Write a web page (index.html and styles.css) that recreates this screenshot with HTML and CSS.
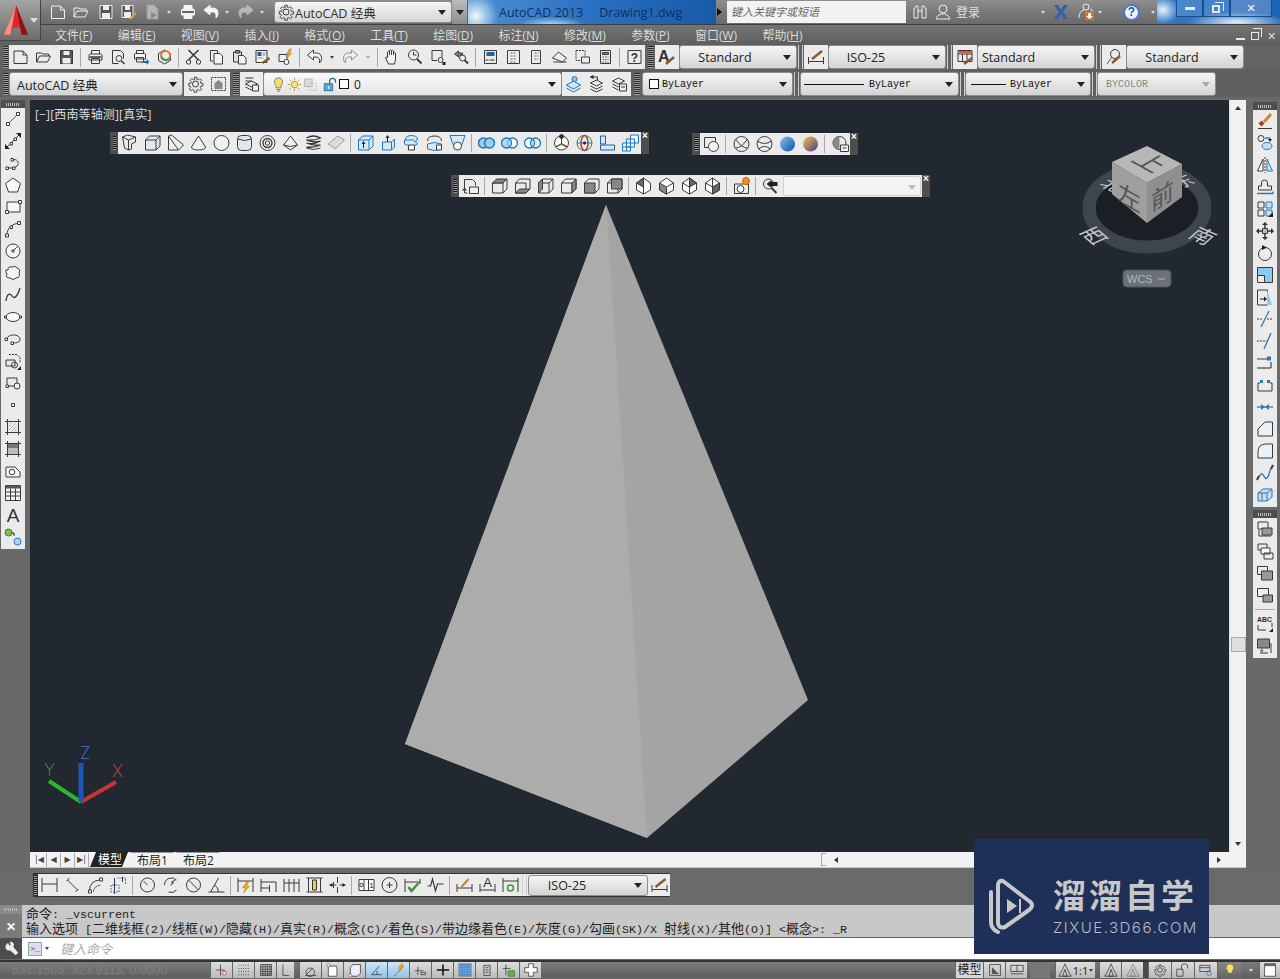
FILE: index.html
```html
<!DOCTYPE html>
<html lang="zh">
<head>
<meta charset="utf-8">
<title>AutoCAD 2013</title>
<link rel="stylesheet" href="styles.css">
</head>
<body>
<svg class="defs" width="0" height="0">
  <defs>
    <linearGradient id="ball" x1="0" y1="0" x2="1" y2="1"><stop offset="0" stop-color="#8cc4f0"/><stop offset="1" stop-color="#0a4fa8"/></linearGradient>
    <linearGradient id="gold" x1="0" y1="0" x2="1" y2="1"><stop offset="0" stop-color="#f5c33a"/><stop offset="1" stop-color="#4a3a9a"/></linearGradient>
    <symbol id="new" viewBox="0 0 18 18"><path d="M2.500 3h9l4 4v8.500h-13zM11.500 3v4h4"/></symbol>
    <symbol id="pub" viewBox="0 0 18 18"><path fill="#b5b5b5" stroke="#9a9a9a" d="M3 2h7l4 4v10H3z"/><path fill="#888" stroke="none" d="M7 9l6 3-6 4z"/></symbol>
    <symbol id="open" viewBox="0 0 18 18"><path d="M2 14V5h5l1 1h6v2M2 14l3-6h11l-3 6z"/></symbol>
    <symbol id="save" viewBox="0 0 18 18"><path fill="#555" d="M3 2.500h12v13H3z"/><path fill="#eee" stroke="none" d="M6 3h6v4H6zM5 10h8v5.500H5z"/></symbol>
    <symbol id="saveas" viewBox="0 0 18 18"><path fill="#555" d="M2 2.500h11v12H2z"/><path fill="#eee" stroke="none" d="M5 3h5v4H5zM4 9h7v5H4z"/><path stroke="#e0a030" stroke-width="2" d="M10 16l6-6"/></symbol>
    <symbol id="print" viewBox="0 0 18 18"><path d="M5 6V2.500h8V6M2.500 12V7.500q0-1.500 1.500-1.500h10q1.500 0 1.500 1.500V12zM5 10.500h8v5H5z" fill="#f4f4f4"/><path fill="#666" stroke="none" d="M3 8h12v2H3z"/></symbol>
    <symbol id="preview" viewBox="0 0 18 18"><path d="M3 2.500h8l3 3v5M3 2.500v13h6"/><circle cx="9.500" cy="10.500" r="3"/><path stroke-width="1.600" d="M12 13l3 3"/></symbol>
    <symbol id="plot" viewBox="0 0 18 18"><path d="M4 5V2.500h7V5M2 11V6.500q0-1 1-1h9q1 0 1 1V11zM4 9.500h7V14H4z" fill="#f4f4f4"/><path stroke="#1f6fb5" stroke-width="2" d="M10 14h5"/><path fill="#1f6fb5" stroke="none" d="M14 11l3 3-3 3z"/></symbol>
    <symbol id="render" viewBox="0 0 18 18"><path d="M9 2l6 3.500v7L9 16l-6-3.500v-7z"/><circle cx="10" cy="7.500" r="4.500" fill="none" stroke="#d9822b" stroke-width="2"/><path stroke="#2f9e6e" stroke-width="2" d="M6 9q3 5 8 2"/></symbol>
    <symbol id="cut" viewBox="0 0 18 18"><path stroke-width="1.600" d="M4 2l10 10M14 2L4 12"/><circle cx="4" cy="14" r="2.200"/><circle cx="14" cy="14" r="2.200"/></symbol>
    <symbol id="copy" viewBox="0 0 18 18"><path d="M3 2.500h7v3M3 2.500V13h3M6.500 5.500h6l2.500 2.500v8H6.500z" fill="#f4f4f4"/></symbol>
    <symbol id="paste" viewBox="0 0 18 18"><path d="M3 4h8v10H3zM5 2.500h4V5H5z" fill="#ddd"/><path d="M8 7.500h5l2.500 2.500v6H8z" fill="#f4f4f4"/></symbol>
    <symbol id="match" viewBox="0 0 18 18"><path fill="#f4f4f4" d="M2.500 2.500h11v12h-11z"/><path fill="#1f5fa8" stroke="none" d="M4 4h4v4H4z"/><path stroke="#888" d="M9 5h3M9 7h3M4 10h6"/><path stroke="#8a5a2a" stroke-width="2.500" d="M9 15l7-5"/></symbol>
    <symbol id="block" viewBox="0 0 18 18"><path d="M2.500 6.500h8v7h-8z"/><circle cx="10" cy="14" r="2.500" fill="#fff"/><path fill="#f0a818" stroke="#b87a10" stroke-width=".5" d="M13 1l-3 5h2l-1 4 4-5h-2l2-4z"/></symbol>
    <symbol id="undo" viewBox="0 0 18 18"><path d="M2 7l6-5v3h3q5 0 5 5.500 0 3-2 4.500 .500-6-3-6H8v3z" fill="#f4f4f4"/></symbol>
    <symbol id="redo" viewBox="0 0 18 18"><path d="M16 7l-6-5v3H7q-5 0-5 5.500 0 3 2 4.500-.500-6 3-6h3v3z" fill="#f4f4f4"/></symbol>
    <symbol id="hand" viewBox="0 0 18 18"><path fill="#f4f4f4" d="M5 16l-3-6q0-1.500 2-.500V4q1-1.500 2 0v3-4.500q1-1.500 2 0V7 3q1-1.500 2 0v4-2q1-1.500 2 0v6l-1 5z"/></symbol>
    <symbol id="zoomrt" viewBox="0 0 18 18"><circle cx="7" cy="7" r="5"/><path d="M7 4v3h3"/><path stroke-width="2" d="M10.500 11l4.500 4.500"/></symbol>
    <symbol id="zoomw" viewBox="0 0 18 18"><path d="M2.500 2.500h10v7M2.500 2.500v10h5"/><circle cx="11" cy="12" r="2.500"/><path fill="#222" stroke="none" d="M13 14h3v3h-3z"/></symbol>
    <symbol id="zoomp" viewBox="0 0 18 18"><path fill="#888" d="M2 6l4-3v2h4v2H6v2z"/><circle cx="10" cy="10" r="3"/><path stroke-width="2" d="M12 12l3.500 3.500"/></symbol>
    <symbol id="props" viewBox="0 0 18 18"><path d="M3 2.500h12v13H3z"/><path fill="#1f5fa8" stroke="none" d="M5 4h8v4H5z"/><path d="M7 12H4m9 0H8"/></symbol>
    <symbol id="grid" viewBox="0 0 18 18"><path d="M3 2.500h12v13H3z"/><path stroke="#666" stroke-dasharray="2 1" d="M6 5h6M6 8h6M6 11h6M6 14h6"/></symbol>
    <symbol id="tool" viewBox="0 0 18 18"><path d="M4 2.500h9v13H4z"/><path stroke="#666" stroke-dasharray="2 1" d="M7 5h4M7 8h4M7 11h4"/></symbol>
    <symbol id="sheet" viewBox="0 0 18 18"><path d="M2 10l6-6 8 6-4 4z" fill="#eee"/><path d="M3 14h13"/></symbol>
    <symbol id="mark" viewBox="0 0 18 18"><path stroke-dasharray="2 1" d="M2.500 2.500h9v10h-9z"/><path fill="#eee" d="M8 9h8v6H8z"/></symbol>
    <symbol id="calc" viewBox="0 0 18 18"><path d="M4 2.500h10v13H4z"/><path fill="#888" d="M6 4.500h6v2H6z"/><path stroke="#555" stroke-dasharray="1.500 1" d="M6 9h6M6 11.500h6M6 14h6"/></symbol>
    <symbol id="help" viewBox="0 0 18 18"><path d="M2.500 2.500h13v13h-13z"/><text x="9" y="14" font-size="12" font-weight="700" text-anchor="middle" fill="#333" stroke="none" font-family="Liberation Sans">?</text></symbol>
    <symbol id="gear" viewBox="0 0 18 18"><circle cx="9" cy="9" r="3"/><path d="M7.500 1.500h3v2.300l1.700.7 1.600-1.600 2.100 2.100-1.600 1.600.7 1.700h2.300v3h-2.300l-.7 1.700 1.600 1.600-2.100 2.100-1.600-1.600-1.700.7v2.300h-3v-2.300l-1.700-.7-1.600 1.600-2.100-2.100 1.600-1.600-.7-1.700H1.500v-3h2.300l.7-1.700-1.600-1.600 2.100-2.100 1.600 1.600 1.700-.7z" transform="translate(.9 .9) scale(.9)"/></symbol>
    <symbol id="wspace" viewBox="0 0 18 18"><path stroke-dasharray="2 1" d="M2 2.500h14v13H2z"/><path fill="#888" stroke="none" d="M5 14V8l4-3 4 3v6z"/></symbol>
    <symbol id="layer" viewBox="0 0 18 18"><path d="M3 3h8M3 6h6M3 9l6-3 6 3-6 3zM3 12l6 3 6-3" /><path fill="#eee" d="M10 10h6v6h-6z"/></symbol>
    <symbol id="bulb" viewBox="0 0 18 18"><path fill="#f6df62" stroke="#776" d="M9 1a5 5 0 0 1 3 9v3H6v-3a5 5 0 0 1 3-9z"/><path stroke="#666" d="M6.500 15h5M7.500 17h3"/></symbol>
    <symbol id="sun" viewBox="0 0 18 18"><circle cx="9" cy="9" r="4" fill="#f8e080" stroke="#a89040"/><path stroke="#a89040" d="M9 1v3M9 14v3M1 9h3M14 9h3M3 3l2 2M13 13l2 2M3 15l2-2M13 5l2-2"/></symbol>
    <symbol id="frz" viewBox="0 0 18 18"><path stroke="#aaa" fill="#ddd" d="M2 2.500h9v9H2z"/><path stroke="#bbb" stroke-dasharray="2 1" d="M7 7h9v9H7z"/></symbol>
    <symbol id="lock" viewBox="0 0 18 18"><path fill="#59a8d8" stroke="#24678f" d="M1.500 8h10v8.500h-10z"/><path stroke="#24678f" stroke-width="1.500" d="M8 8V5q0-3.500 3.500-3.500T15 5v2"/><path fill="#fff" stroke="none" d="M6 11h1.500v3H6z"/></symbol>
    <symbol id="lyon" viewBox="0 0 18 18"><path stroke="#1f6fb5" fill="#cfe4f5" d="M2 10l7-4 7 4-7 4z"/><path stroke="#1f6fb5" d="M2 13l7 4 7-4"/><circle cx="10" cy="4" r="2.500" fill="#9cc4e8" stroke="#1f6fb5"/></symbol>
    <symbol id="lyprev" viewBox="0 0 18 18"><path d="M3 8l6-3 6 3-6 3zM3 11l6 3 6-3M3 14l6 3 6-3"/><path fill="#222" stroke="none" d="M2 2l4-2v4z"/><path d="M5 2h5v3"/></symbol>
    <symbol id="lystate" viewBox="0 0 18 18"><path d="M2 6l6-3 6 3-6 3zM2 9l6 3M2 12l6 3"/><path fill="#eee" d="M9 9h7v7H9z"/><path d="M10.500 12h4"/></symbol>
    <symbol id="textstyle" viewBox="0 0 18 18"><text x="0" y="14" font-size="16" font-family="Liberation Sans" font-weight="700" fill="#333" stroke="none">A</text><path stroke="#8a5a2a" stroke-width="2.500" d="M8 16l8-7"/></symbol>
    <symbol id="dimstyle" viewBox="0 0 18 18"><path d="M1.500 9v7M16.500 9v7M1.500 13.500h15"/><path stroke="#8a5a2a" stroke-width="2.500" d="M5 11l10-8"/></symbol>
    <symbol id="tablestyle" viewBox="0 0 18 18"><path d="M2 2.500h14v11H2zM2 6h14M6.500 6v7.500M11 6v7.500"/><path fill="#d85a3a" stroke="none" d="M3 3h12v2.500H3z"/><path stroke="#8a5a2a" stroke-width="2.500" d="M8 16l8-6"/></symbol>
    <symbol id="mlstyle" viewBox="0 0 18 18"><circle cx="10" cy="6" r="4.500"/><path stroke="#1f5fa8" d="M7 9l-5 7"/><path stroke="#8a5a2a" stroke-width="2.500" d="M7 15l8-7"/></symbol>
    <symbol id="line" viewBox="0 0 18 18"><path stroke="#555" d="M4 14L14 4"/><path fill="#fff" d="M2.500 12.500h3v3h-3zM12.500 2.500h3v3h-3z"/></symbol>
    <symbol id="xline" viewBox="0 0 18 18"><path d="M3 15L15 3"/><path fill="#222" stroke="none" d="M1 17v-5l5 5zM17 1v5l-5-5z"/><path fill="#fff" d="M6 10.500h2.500V13H6zM10 6h2.500v2.500H10z"/></symbol>
    <symbol id="pline" viewBox="0 0 18 18"><path d="M3 14h7l3-2c3-3 0-8-5-6"/><path fill="#fff" d="M2 13h2.500v2.500H2zM8.500 13H11v2.500H8.500zM7 4.500h2.500V7H7z"/></symbol>
    <symbol id="polygon" viewBox="0 0 18 18"><path d="M9 2l7.500 5.500-3 8.500h-9l-3-8.500z" fill="#f8f8f8"/></symbol>
    <symbol id="rect" viewBox="0 0 18 18"><path d="M3 4h13v10H3z" fill="#f8f8f8"/><path fill="#fff" d="M1.500 12.500h3v3h-3zM14.500 2.500h3v3h-3z"/></symbol>
    <symbol id="arc" viewBox="0 0 18 18"><path d="M3 15C3 8 8 4 15 3"/><path fill="#fff" d="M1.500 14h3v3h-3zM6 6h2.500v2.500H6zM13.500 1.500h3v3h-3z"/></symbol>
    <symbol id="circle" viewBox="0 0 18 18"><circle cx="9" cy="9" r="7" fill="#f8f8f8"/><path d="M9 9l4-4"/><path fill="#fff" d="M8 8h2v2H8z"/></symbol>
    <symbol id="cloud" viewBox="0 0 18 18"><path d="M4 6q0-4 4-3 3-2 5 1 4 1 2 5 2 4-3 5-3 3-6 0-5 0-3-4-2-2-1-4z" fill="#f4f4f4"/></symbol>
    <symbol id="spline" viewBox="0 0 18 18"><path stroke-width="1.300" d="M2 15C3 7 6 7 8 10s5 2 8-8"/></symbol>
    <symbol id="ellipse" viewBox="0 0 18 18"><ellipse cx="9" cy="9" rx="7" ry="4.500" fill="#f8f8f8"/><path fill="#fff" d="M.5 8h2v2h-2zM15.500 8h2v2h-2z"/></symbol>
    <symbol id="elarc" viewBox="0 0 18 18"><path d="M3 9c1-6 14-5 13 1-1 3-5 3-8 3"/><path fill="#fff" d="M1 8h2.500v2.500H1zM7 12h2.500v2.500H7z"/></symbol>
    <symbol id="insert" viewBox="0 0 18 18"><path stroke-dasharray="2 1" d="M5 2.500h8l3 3v5"/><path d="M2 8h9v6H2z"/><circle cx="10.500" cy="13" r="3"/><path fill="#222" stroke="none" d="M17 14v4h-4z"/></symbol>
    <symbol id="mkblock" viewBox="0 0 18 18"><path d="M3 4h10v8H3z"/><circle cx="13" cy="12" r="3" fill="#eee"/><path fill="#fff" d="M2 11h2.500v2.500H2z"/></symbol>
    <symbol id="point" viewBox="0 0 18 18"><path fill="#fff" d="M7.500 7.500h3v3h-3z"/></symbol>
    <symbol id="hatch" viewBox="0 0 18 18"><path d="M3.500 1v16M14.500 1v16M1 3.500h16M1 14.500h16"/><path stroke="#999" stroke-dasharray="1.500 1" d="M5 8l3-3M5 12l7-7M8 13l5-5M11 13l2-2"/></symbol>
    <symbol id="gradient" viewBox="0 0 18 18"><path fill="#777" stroke="none" d="M4 4h10v4H4z"/><path fill="#bbb" stroke="none" d="M4 8h10v6H4z"/><path d="M3.500 1v16M14.500 1v16M1 3.500h16M1 14.500h16"/></symbol>
    <symbol id="region" viewBox="0 0 18 18"><path d="M2 5h9l5 5v5H2z" fill="#f8f8f8"/><circle cx="8" cy="10" r="2.800"/></symbol>
    <symbol id="table" viewBox="0 0 18 18"><path fill="#f4f4f4" d="M1.500 1.500h15v15h-15z"/><path fill="#555" stroke="none" d="M1.500 1.500h15v3h-15z"/><path d="M1.500 8h15M1.500 12h15M6.500 4.500v12M11.500 4.500v12"/></symbol>
    <symbol id="mtext" viewBox="0 0 18 18"><text x="9" y="16" font-size="19" text-anchor="middle" font-family="Liberation Sans" fill="#333" stroke="none">A</text></symbol>
    <symbol id="addsel" viewBox="0 0 18 18"><circle cx="4.500" cy="4.500" r="3.500" fill="#7cc046" stroke="#3e8020"/><circle cx="13.500" cy="13.500" r="3.500" fill="#a8d4f4" stroke="#2a78b8"/><path stroke="#222" d="M8 5h2v3"/></symbol>
    <symbol id="erase" viewBox="0 0 18 18"><path stroke="#c08a30" stroke-width="3" d="M8 10l7-8"/><path stroke="#a83a20" stroke-width="4" d="M4 13l3-3"/><path d="M2 16.500h14"/></symbol>
    <symbol id="xcopy" viewBox="0 0 18 18"><circle cx="5" cy="4.500" r="3"/><path d="M9 4h5v2"/><path fill="#222" stroke="none" d="M12 5h4l-2 3z"/><ellipse cx="11" cy="12" rx="5" ry="3.500" fill="#c5e0f5" stroke="#2a78b8"/></symbol>
    <symbol id="mirror" viewBox="0 0 18 18"><path fill="#fff" d="M7 3v12H1.500z"/><path stroke="#2a78b8" fill="#bfe0f5" d="M11 3v12h5.500z"/><path stroke-dasharray="2 1" d="M9 1v16"/></symbol>
    <symbol id="offset" viewBox="0 0 18 18"><path d="M2.500 12V8h3V5q0-3 3-3t3 3v3h4v4z"/><path stroke="#2a78b8" stroke-width="1.300" d="M1 15.500h16v-2"/></symbol>
    <symbol id="array" viewBox="0 0 18 18"><path d="M2 2h6v6H2zM2 10h6v6H2z"/><path stroke="#2a78b8" fill="#bfe0f5" d="M10 2h6v6h-6zM10 10h6v6h-6z"/><path fill="#222" stroke="none" d="M17 12v5h-5z"/></symbol>
    <symbol id="move" viewBox="0 0 18 18"><path fill="#333" stroke="none" d="M9 0l3 3H6zM9 18l-3-3h6zM0 9l3-3v6zM18 9l-3 3V6z"/><path stroke="#333" stroke-width="1.500" d="M9 3v12M3 9h12"/><path fill="#bbb" d="M6.500 6.500h5v5h-5z"/></symbol>
    <symbol id="rotate" viewBox="0 0 18 18"><circle cx="9" cy="10" r="6.500"/><path fill="#222" stroke="none" d="M6 1l5 2.500L6 6z"/></symbol>
    <symbol id="scale" viewBox="0 0 18 18"><path d="M1.500 1.500h15v15h-15z"/><path fill="#8cc8f0" stroke="none" d="M2 2h14v14H8V9H2z"/><path d="M1.500 9.500h7v7"/></symbol>
    <symbol id="stretch" viewBox="0 0 18 18"><path d="M1.500 2h10v15h-10z"/><path fill="#8cc8f0" stroke="none" d="M11 2l5 15h-5z"/><path stroke="#222" d="M4 11h6"/><path fill="#222" stroke="none" d="M8 8.500l3 2.500-3 2.500z"/></symbol>
    <symbol id="trim" viewBox="0 0 18 18"><path stroke="#2a78b8" stroke-width="1.300" d="M13 1L5 17"/><path stroke-dasharray="2 1" d="M1 9h6M11 9h6"/></symbol>
    <symbol id="extend" viewBox="0 0 18 18"><path stroke="#2a78b8" stroke-width="1.300" d="M15 1L8 17"/><path stroke-dasharray="2 1" d="M1 9h10"/></symbol>
    <symbol id="breakpt" viewBox="0 0 18 18"><path stroke="#222" d="M1 14h14V8"/><path d="M1 5h10"/><path fill="#2a78b8" stroke="none" d="M11 2.500h4v4h-4z"/></symbol>
    <symbol id="break" viewBox="0 0 18 18"><path d="M2 7v8h14V7M2 7h2M14 7h2"/><path fill="#2a78b8" stroke="none" d="M4 4h3v3H4zM11 4h3v3h-3z"/></symbol>
    <symbol id="join" viewBox="0 0 18 18"><path stroke="#2a78b8" stroke-width="1.300" d="M1 9h16"/><path fill="#2a78b8" stroke="none" d="M5 6l4 3-4 3zM13 6L9 9l4 3z"/></symbol>
    <symbol id="chamfer" viewBox="0 0 18 18"><path fill="#e8f2fa" d="M2 9l7-7h7.500v14H2z"/></symbol>
    <symbol id="fillet" viewBox="0 0 18 18"><path fill="#e8f2fa" d="M2 16V10q0-8 8-8h6.500v14z"/></symbol>
    <symbol id="blend" viewBox="0 0 18 18"><path stroke="#2a78b8" stroke-width="1.300" d="M3 13c4-9 5 4 8 1s2-6 4-10"/><path stroke-width="2" d="M1 16l2-4M15 5l2-4"/></symbol>
    <symbol id="explode" viewBox="0 0 18 18"><path stroke="#2a78b8" fill="#c5e0f5" d="M2 7l5-4h9v8l-5 4H2z"/><path stroke="#2a78b8" d="M2 7h9v8M11 7l5-4M6 7v8"/></symbol>
    <symbol id="ord1" viewBox="0 0 18 18"><path d="M2 2h10v7H2z"/><path fill="#999" d="M6 8h10v7H6z"/><path d="M3 10v6h12"/></symbol>
    <symbol id="ord2" viewBox="0 0 18 18"><path d="M2 2h9v6H2z"/><path fill="#fff" d="M5 6h9v6H5z"/><path d="M8 11h9v6H8z"/></symbol>
    <symbol id="ord3" viewBox="0 0 18 18"><path d="M1.500 2.500h10v8h-10z"/><path fill="#999" d="M5.500 7h11v9h-11z"/></symbol>
    <symbol id="ord4" viewBox="0 0 18 18"><path d="M1.500 2.500h11v8h-11z"/><path fill="#999" d="M7 9h9.500v7H7z"/></symbol>
    <symbol id="abc" viewBox="0 0 18 18"><text x="1" y="7" font-size="7" font-weight="700" font-family="Liberation Sans" fill="#333" stroke="none">ABC</text><path d="M16 8v4M2 10v5h8"/><path fill="#222" stroke="none" d="M17 13v4h-4z"/></symbol>
    <symbol id="hatback" viewBox="0 0 18 18"><path fill="#888" d="M1.500 2h12v9h-12z"/><path d="M4 14h3l-1.500-2M4 16h8M15 6v10"/></symbol>
    <symbol id="polysolid" viewBox="0 0 18 18"><path d="M2 3l6 3v10l-4-2zM8 6l7-3v5l-4 2v5l-3 1zM2 3l5-2 8 2" fill="#e8e8e8"/></symbol>
    <symbol id="box" viewBox="0 0 18 18"><path fill="#e4e8ec" d="M2 6l4-4h10.500v10l-4 4H2zM2 6h10.500v10M12.500 6l4-4"/></symbol>
    <symbol id="wedge" viewBox="0 0 18 18"><path fill="#eef0f2" d="M2 2v14h10l5-5L5 1z"/><path d="M2 2l10 14"/></symbol>
    <symbol id="cone" viewBox="0 0 18 18"><path fill="#eef0f2" d="M9 2l7 11q0 3-7 3t-7-3z"/></symbol>
    <symbol id="sphere" viewBox="0 0 18 18"><circle cx="9" cy="9" r="7.500" fill="#eef0f2"/></symbol>
    <symbol id="cylinder" viewBox="0 0 18 18"><rect x="2" y="1.500" width="14" height="15" rx="4" fill="#e4e8ec"/><path d="M2 5q7 3 14 0"/></symbol>
    <symbol id="torus" viewBox="0 0 18 18"><circle cx="9" cy="9" r="7.500" fill="#eee"/><circle cx="9" cy="9" r="4.500" stroke-width="1.400"/><circle cx="9" cy="9" r="2.200"/></symbol>
    <symbol id="pyramid" viewBox="0 0 18 18"><path fill="#eef0f2" d="M9 2l7 9-7 5-7-5zM2 11q7 3 14 0"/></symbol>
    <symbol id="helix" viewBox="0 0 18 18"><path stroke-width="1.300" d="M2 4q7-4 14 0-7 3-14 2 7 3 14 1-7 4-14 2 7 3 14 2-7 3-14 2"/><path d="M2 14q7 3 14 0"/></symbol>
    <symbol id="planar" viewBox="0 0 18 18"><path stroke="#777" fill="#ddd" stroke-dasharray="2 1" d="M1 10l9-8 7 4-9 9z"/></symbol>
    <symbol id="extrude" viewBox="0 0 18 18"><path stroke="#1f78c0" fill="#d5e9f8" d="M2 6l4-4h10.500v10l-4 4H2zM2 6h10.500v10M12.500 6l4-4"/><path stroke="#222" d="M7 14V9"/><path fill="#222" stroke="none" d="M5 10l2-3 2 3z"/></symbol>
    <symbol id="presspull" viewBox="0 0 18 18"><path stroke="#1f78c0" fill="#d5e9f8" d="M3 8h9v8H3zM12 8l3-3v8l-3 3"/><path stroke="#222" d="M8 8V3"/><path fill="#222" stroke="none" d="M6 4l2-3 2 3z"/></symbol>
    <symbol id="sweep" viewBox="0 0 18 18"><ellipse cx="9" cy="5" rx="6" ry="3.500" fill="#d5e9f8" stroke="#1f78c0"/><path stroke="#1f78c0" fill="#d5e9f8" d="M2 6h9l4 4-6 3-7-3z"/><path fill="#fff" d="M6 11h6v5H6z"/></symbol>
    <symbol id="revolve" viewBox="0 0 18 18"><path stroke="#1f78c0" fill="#d5e9f8" d="M2 10q7-3 14 0v5q-7 3-14 0z"/><path d="M2 7q0-5 7-5t7 5"/><path fill="#fff" d="M11 11h5v5h-5z"/></symbol>
    <symbol id="loft" viewBox="0 0 18 18"><path stroke="#1f78c0" fill="#d5e9f8" d="M1.500 1.500h15l-3 9h-9z"/><circle cx="9" cy="12" r="4" fill="#fff"/></symbol>
    <symbol id="union" viewBox="0 0 18 18"><g stroke="#1f78c0" stroke-width="1.500"><circle cx="6" cy="9" r="5" fill="#9dcdf0"/><circle cx="12" cy="9" r="5" fill="#9dcdf0"/></g></symbol>
    <symbol id="subtract" viewBox="0 0 18 18"><g stroke="#1f78c0" stroke-width="1.300"><circle cx="12" cy="9" r="5" fill="#fff"/><circle cx="6" cy="9" r="5" fill="#9dcdf0" fill-opacity=".7"/></g></symbol>
    <symbol id="intersect" viewBox="0 0 18 18"><g stroke="#1f78c0" stroke-width="1.300"><circle cx="6" cy="9" r="5" fill="#fff"/><circle cx="12" cy="9" r="5" fill="none"/></g><path fill="#9dcdf0" stroke="none" d="M9 5q2 4 0 8-2-4 0-8z"/></symbol>
    <symbol id="move3d" viewBox="0 0 18 18"><circle cx="9" cy="9" r="7" fill="#fff"/><path stroke="#a83020" stroke-width="1.500" d="M9 10l6 3"/><path stroke="#2a8a3a" stroke-width="1.500" d="M9 10l-6 3"/><path d="M9 2v8"/><circle cx="9" cy="2.500" r="2" fill="#333"/></symbol>
    <symbol id="rotate3d" viewBox="0 0 18 18"><circle cx="9" cy="9" r="7.500" stroke="#2a8a3a"/><ellipse cx="9" cy="9" rx="3.500" ry="7.500" stroke="#c83030" stroke-width="1.500"/><path stroke="#1f78c0" d="M1.500 9h15"/><circle cx="9" cy="9" r="1.200" fill="#222"/></symbol>
    <symbol id="align3d" viewBox="0 0 18 18"><path stroke="#1f5fa8" fill="#d5e9f8" d="M2 2h5v8H2zM2 11h14v5H2z"/></symbol>
    <symbol id="array3d" viewBox="0 0 18 18"><path stroke="#1f78c0" fill="#eef6fc" d="M9 1h8v8H9zM5 5h8v8H5zM1 9h8v8H1z"/><path stroke="#1f78c0" d="M1 13h8M5 9v8"/></symbol>
    <symbol id="mgview" viewBox="0 0 18 18"><path d="M2 2.500h11v10H2z"/><circle cx="11" cy="11.500" r="5" fill="#f4f4f4"/></symbol>
    <symbol id="wire" viewBox="0 0 18 18"><circle cx="9" cy="9" r="7.500"/><path d="M3 4q6 9 12 9M15 4q-6 9-12 9"/></symbol>
    <symbol id="hidden" viewBox="0 0 18 18"><circle cx="9" cy="9" r="7.500"/><path d="M2 6q7 5 14 0M3 14q6-5 12 0"/></symbol>
    <symbol id="real" viewBox="0 0 18 18"><circle cx="9" cy="9" r="7.500" fill="url(#ball)" stroke="none"/></symbol>
    <symbol id="concept" viewBox="0 0 18 18"><circle cx="9" cy="9" r="7.500" fill="url(#gold)" stroke="none"/></symbol>
    <symbol id="vsman" viewBox="0 0 18 18"><circle cx="8" cy="8" r="6.500"/><path fill="#888" stroke="none" d="M8 2a6 6 0 0 0 0 12z"/><path fill="#f4f4f4" d="M9 10h8v6.500H9z"/><path d="M11 13h4"/></symbol>
    <symbol id="views" viewBox="0 0 18 18"><path d="M3 2.500h8l3 3v3M3 2.500v10"/><path fill="#eee" d="M8 10h9v6.500H8z"/><path d="M1 14l2-3 2 3M3 12v4h3"/></symbol>
    <symbol id="vtop" viewBox="0 0 18 18"><path d="M2 6h10.500v10H2zM12.500 6l4-4v10l-4 4"/><path fill="#888" d="M2 6l4-4h10.500l-4 4z"/></symbol>
    <symbol id="vbot" viewBox="0 0 18 18"><path d="M2 6l4-4h10.500v10l-4 4H2zM2 6h10.500v10"/><path fill="#888" d="M2 16l4-4h10.500l-4 4z"/></symbol>
    <symbol id="vleft" viewBox="0 0 18 18"><path d="M2 6l4-4h10.500v10l-4 4H2zM2 6h10.500v10M12.500 6l4-4"/><path fill="#888" d="M2 6l4-4v10l-4 4z"/></symbol>
    <symbol id="vright" viewBox="0 0 18 18"><path d="M2 6l4-4h10.500v10l-4 4H2zM2 6h10.500v10"/><path fill="#888" d="M12.500 6l4-4v10l-4 4z"/></symbol>
    <symbol id="vfront" viewBox="0 0 18 18"><path d="M2 6l4-4h10.500v10l-4 4H2z"/><path fill="#888" d="M2 6h10.500v10H2z"/></symbol>
    <symbol id="vback" viewBox="0 0 18 18"><path d="M2 6h10.500v10H2zM2 6l4-4h10.500v10l-4 4"/><path fill="#888" d="M6 2h10.500v10H6z"/></symbol>
    <symbol id="iso1" viewBox="0 0 18 18"><path fill="#fff" d="M9 1l7 5v7l-7 4-7-4V6z"/><path fill="#666" d="M9 1L2 6l7 4z"/><path d="M9 10v7"/></symbol>
    <symbol id="iso2" viewBox="0 0 18 18"><path fill="#fff" d="M9 1l7 5v7l-7 4-7-4V6z"/><path fill="#888" d="M2 6l7 4v7l-7-4z"/><path d="M9 10l7-4"/></symbol>
    <symbol id="iso3" viewBox="0 0 18 18"><path fill="#fff" d="M9 1l7 5v7l-7 4-7-4V6z"/><path fill="#666" d="M9 1l7 5-7 4z"/><path d="M9 10v7M2 6l7 4"/></symbol>
    <symbol id="iso4" viewBox="0 0 18 18"><path fill="#fff" d="M9 1l7 5v7l-7 4-7-4V6z"/><path fill="#666" d="M9 10l7-4v7l-7 4z"/><path d="M2 6l7 4 0-9"/></symbol>
    <symbol id="camera" viewBox="0 0 18 18"><path fill="#eee" d="M2 7h14v9.500H2z"/><circle cx="8" cy="12" r="3.500" fill="#fff"/><circle cx="13.500" cy="4" r="3.500" fill="#f09020" stroke="#d06010"/></symbol>
    <symbol id="vback2" viewBox="0 0 18 18"><circle cx="7" cy="7" r="5"/><path fill="#222" stroke="none" d="M5 7l5-4v2h6v4h-6v2z"/><path stroke-width="2" d="M10 11l5 5"/></symbol>
    <symbol id="dlin" viewBox="0 0 18 18"><path d="M1.500 2v14M16.500 2v14M1.500 8h15"/></symbol>
    <symbol id="dali" viewBox="0 0 18 18"><path d="M3 5l3-3M12 16l3-3M4 4l10 10"/></symbol>
    <symbol id="darc" viewBox="0 0 18 18"><path d="M3 15Q3 5 13 4"/><path stroke="#666" d="M7 16q0-6 7-7"/><path fill="#fff" d="M13 2h3v3h-3zM2 14h3v3H2z"/></symbol>
    <symbol id="dord" viewBox="0 0 18 18"><path stroke="#1f78c0" stroke-dasharray="2 1" d="M1.500 9v7h8V9zM8 2h8v7"/><path d="M5 2v16M13 1v5"/></symbol>
    <symbol id="drad" viewBox="0 0 18 18"><circle cx="9" cy="9" r="7"/><path d="M9 9L5 5"/></symbol>
    <symbol id="djog" viewBox="0 0 18 18"><path d="M3 9a7 7 0 0 1 12-5M15 14a7 7 0 0 1-8 2M9 9l3-2-2-1 4-2"/></symbol>
    <symbol id="ddia" viewBox="0 0 18 18"><circle cx="9" cy="9" r="7"/><path d="M4 4l10 10"/></symbol>
    <symbol id="dang" viewBox="0 0 18 18"><path d="M1 16h16M3 16L11 2"/><path d="M7 9q4 2 4 7"/></symbol>
    <symbol id="dquick" viewBox="0 0 18 18"><path d="M1.500 2v14M16.500 2v14M1.500 5h15"/><path fill="#f0a818" stroke="#b87a10" stroke-width=".5" d="M10 6L6 12h3l-2 5 6-7h-3l2-4z"/></symbol>
    <symbol id="dbase" viewBox="0 0 18 18"><path d="M1.500 3v13M16.500 6v10M10 9v7M1.500 6h15M1.500 12h8.500"/></symbol>
    <symbol id="dcont" viewBox="0 0 18 18"><path d="M1.500 3v13M6.500 3v13M11.500 3v13M16.500 3v13M1.500 7h15"/></symbol>
    <symbol id="dspace" viewBox="0 0 18 18"><path d="M1 2h16M1 16h16M3 2v14M15 2v14"/><path fill="#f0d040" stroke="#333" d="M7 4h4v10H7z"/></symbol>
    <symbol id="dbreak" viewBox="0 0 18 18"><path d="M1 9h7M11 9h6M9 1v6M9 11v6M5 6v6"/><path fill="#222" stroke="none" d="M1 9l3-2v4zM17 9l-3-2v4z"/></symbol>
    <symbol id="dtol" viewBox="0 0 18 18"><path fill="#fff" d="M1.500 3.500h15v11h-15zM6.500 3.500v11M11 3.500v11"/><circle cx="4" cy="9" r="1.700"/><text x="14" y="12" font-size="8" text-anchor="middle" font-family="Liberation Sans" fill="#222" stroke="none">1</text></symbol>
    <symbol id="dcen" viewBox="0 0 18 18"><circle cx="9" cy="9" r="7.500"/><path d="M9 6v6M6 9h6"/></symbol>
    <symbol id="dinsp" viewBox="0 0 18 18"><path d="M1.500 3v13M16.500 3v5M1.500 6h15"/><path stroke="#3a9a30" stroke-width="2.500" d="M5 11l3 4 7-8"/></symbol>
    <symbol id="djogl" viewBox="0 0 18 18"><path stroke-width="1.200" d="M1 10h3l2-7 3 12 2-7h6"/></symbol>
    <symbol id="dedit" viewBox="0 0 18 18"><path d="M1.500 8v8M16.500 8v8M1.500 12h15"/><path stroke="#c08a30" stroke-width="2" d="M6 11l7-8"/></symbol>
    <symbol id="dtext" viewBox="0 0 18 18"><text x="9" y="11" font-size="13" text-anchor="middle" font-family="Liberation Sans" fill="#333" stroke="none">A</text><path d="M1.500 8v8M16.500 8v8M1.500 14h15"/></symbol>
    <symbol id="dupd" viewBox="0 0 18 18"><path d="M1.500 2v14M16.500 2v14M1.500 5h15"/><circle cx="9" cy="12" r="3" stroke="#3a9a30" stroke-width="1.500"/></symbol>
    <symbol id="s-infer" viewBox="0 0 18 18"><path d="M7 2v14M1 9h12"/><path stroke="#d04030" fill="#fff" d="M10 11h4v4h-4z"/></symbol>
    <symbol id="s-snap" viewBox="0 0 18 18"><path stroke-dasharray="1 2" stroke-width="1.300" d="M2 3h14M2 7h14M2 11h14M2 15h14"/></symbol>
    <symbol id="s-grid" viewBox="0 0 18 18"><path d="M2 2h14v14H2zM2 5h14M2 8h14M2 11h14M2 14h14M5 2v14M8 2v14M11 2v14M14 2v14"/></symbol>
    <symbol id="s-ortho" viewBox="0 0 18 18"><path d="M5 2v14h8"/></symbol>
    <symbol id="s-polar" viewBox="0 0 18 18"><path d="M2 16h14M2 16L12 6"/><circle cx="8" cy="12" r="5.500"/></symbol>
    <symbol id="s-osnap" viewBox="0 0 18 18"><path fill="#fff" d="M3 4h11v13H3z"/><circle cx="3" cy="3" r="2" stroke="#d04030" fill="#fff"/></symbol>
    <symbol id="s-3d" viewBox="0 0 18 18"><path fill="#eef" d="M6 2h10v11l-4 4H3V6z"/><circle cx="3" cy="16" r="2" stroke="#d04030" fill="#fff"/></symbol>
    <symbol id="s-ang" viewBox="0 0 18 18"><path d="M2 15h13M2 15L12 4M9 15v-5"/></symbol>
    <symbol id="s-otrack" viewBox="0 0 18 18"><path stroke-dasharray="2 1" d="M3 17L15 3"/><path fill="#f0a818" stroke="#b87a10" stroke-width=".5" d="M12 1L8 7h3l-2 5 6-7h-3l2-4z"/></symbol>
    <symbol id="s-dyn" viewBox="0 0 18 18"><path d="M5 5v10M1 10h11"/><path d="M9 12h6v3H9z"/></symbol>
    <symbol id="s-lw" viewBox="0 0 18 18"><path stroke="#111" stroke-width="2" d="M9 2v14M1 9h16"/></symbol>
    <symbol id="s-tpy" viewBox="0 0 18 18"><path stroke="#888" fill="#4a90d8" d="M1 1h16v16H1z"/><path stroke="#9cc8f0" stroke-dasharray="1 1" d="M1 4h16M1 7h16M1 10h16M1 13h16"/></symbol>
    <symbol id="s-qp" viewBox="0 0 18 18"><path d="M5 3h8v13H5zM7 6h4M7 9h4M7 12h4"/></symbol>
    <symbol id="s-sc" viewBox="0 0 18 18"><path d="M5 2v14M1 7h10"/><path fill="#6ab04c" stroke="#3e8020" d="M8 10h8v7H8z"/></symbol>
    <symbol id="s-cross" viewBox="0 0 18 18"><path fill="#fff" d="M6 1h6v5h5v6h-5v5H6v-5H1V6h5z"/></symbol>
    <symbol id="s-paper" viewBox="0 0 18 18"><path d="M2 2h14v14H2z"/><path fill="#555" stroke="none" d="M5 5v9h9z"/></symbol>
    <symbol id="s-vp" viewBox="0 0 18 18"><path d="M1 3h16v8H1zM9 3v8M1 14h16" /></symbol>
    <symbol id="s-anno" viewBox="0 0 18 18"><path d="M9 1l3 7 5 9H1l5-9z"/><path d="M9 8l3 9H6z"/></symbol>
    <symbol id="s-lockw" viewBox="0 0 18 18"><path d="M1 8h8v9H1z"/><path d="M7 8V4q0-3 4-3t4 3v3"/></symbol>
    <symbol id="s-tray" viewBox="0 0 18 18"><path d="M1 3h13v8H1zM1 6h13"/><circle cx="13" cy="13" r="3" stroke="#2a78b8"/></symbol>
    <symbol id="s-clean" viewBox="0 0 18 18"><path fill="#fff" d="M2 1h14v16H2z"/><path fill="#666" stroke="none" d="M2 1h14v3H2z"/></symbol>
  </defs>
</svg>

<div class="app">
  <!-- title bar -->
  <header class="titlebar">
    <div class="appmenu">
      <svg class="applogo" viewBox="0 0 28 34"><path fill="#d92b2b" d="M14 1L1 33h7l3-8h7l2 8h7z"/><path fill="#8c1616" d="M14 1l6 32h7z"/><path fill="#f0928a" d="M14 1L8 33H1z"/></svg>
      <i class="arrow lt"></i>
    </div>
    <div class="qat">
      <svg class="ic lt"><use href="#new"/></svg>
      <svg class="ic lt"><use href="#open"/></svg>
      <svg class="ic lt qs"><use href="#save"/></svg>
      <svg class="ic lt"><use href="#saveas"/></svg>
      <svg class="ic lt q5"><use href="#pub"/></svg>
      <i class="arrow lt small"></i>
      <svg class="ic lt"><use href="#print"/></svg>
      <svg class="ic lt"><use href="#undo"/></svg>
      <i class="arrow lt small"></i>
      <svg class="ic lt dim"><use href="#redo"/></svg>
      <i class="arrow lt small"></i>
    </div>
    <div class="combo ws-combo"><svg class="ic"><use href="#gear"/></svg><span>AutoCAD 经典</span></div>
    <div class="qat-more"><i class="arrow"></i></div>
    <div class="aero doc-title"><span>AutoCAD 2013</span><span>Drawing1.dwg</span></div>
    <div class="infocenter">
      <i class="tri-r"></i>
      <div class="search">键入关键字或短语</div>
      <svg class="ic lt binoc" viewBox="0 0 18 18"><path d="M3 15V6l2-3h2v12zM11 15V3h2l2 3v9zM7 8h4"/></svg>
      <svg class="ic lt" viewBox="0 0 18 18"><circle cx="9" cy="6" r="4"/><path d="M2 16q1-4 5-5h4q4 1 5 5z"/></svg>
      <span class="login">登录</span>
      <i class="arrow lt small push"></i>
      <svg class="ic xchg" viewBox="0 0 18 18"><path d="M2 2h4l3 5 3-5h4l-5 7 5 7h-4l-3-5-3 5H2l5-7z"/></svg>
      <svg class="ic a360" viewBox="0 0 18 18"><circle cx="9" cy="4" r="3"/><path d="M2 15q0-7 5-8M16 9q0-2-3-3"/><path fill="#e07020" stroke="none" d="M8 8h9v9H8z"/><path fill="#fff" stroke="none" d="M11 10h3v3h2l-3.500 3L9 13h2z"/></svg>
      <i class="arrow lt small"></i>
      <span class="helpball">?</span>
      <i class="arrow lt small"></i>
    </div>
    <div class="winbtns">
      <span class="wb"><b class="wb-min"></b></span>
      <span class="wb"><b class="wb-max"></b></span>
      <span class="wb wb-close">✕</span>
    </div>
  </header>

  <!-- menu bar -->
  <nav class="menubar">
    <span>文件(<u>F</u>)</span><span>编辑(<u>E</u>)</span><span>视图(<u>V</u>)</span><span>插入(<u>I</u>)</span><span>格式(<u>O</u>)</span><span>工具(<u>T</u>)</span><span>绘图(<u>D</u>)</span><span>标注(<u>N</u>)</span><span>修改(<u>M</u>)</span><span>参数(<u>P</u>)</span><span>窗口(<u>W</u>)</span><span>帮助(<u>H</u>)</span>
    <div class="docbtns"><b class="wb-min"></b><b class="wb-max"></b><span>✕</span></div>
  </nav>

  <!-- standard + styles toolbars -->
  <div class="tbrow row1">
    <i class="grip"></i>
    <div class="bar std">
      <svg class="ic"><use href="#new"/></svg><svg class="ic"><use href="#open"/></svg><svg class="ic"><use href="#save"/></svg><i class="sep"></i>
      <svg class="ic"><use href="#print"/></svg><svg class="ic"><use href="#preview"/></svg><svg class="ic"><use href="#plot"/></svg><svg class="ic"><use href="#render"/></svg><i class="sep"></i>
      <svg class="ic"><use href="#cut"/></svg><svg class="ic"><use href="#copy"/></svg><svg class="ic"><use href="#paste"/></svg><svg class="ic"><use href="#match"/></svg><svg class="ic"><use href="#block"/></svg><i class="sep"></i>
      <svg class="ic"><use href="#undo"/></svg><i class="arrow small"></i><svg class="ic dim"><use href="#redo"/></svg><i class="arrow small faded"></i><i class="sep"></i>
      <svg class="ic"><use href="#hand"/></svg><svg class="ic"><use href="#zoomrt"/></svg><svg class="ic"><use href="#zoomw"/></svg><svg class="ic"><use href="#zoomp"/></svg><i class="sep"></i>
      <svg class="ic"><use href="#props"/></svg><svg class="ic"><use href="#grid"/></svg><svg class="ic"><use href="#tool"/></svg><svg class="ic"><use href="#sheet"/></svg><svg class="ic"><use href="#mark"/></svg><svg class="ic"><use href="#calc"/></svg><i class="sep"></i>
      <svg class="ic"><use href="#help"/></svg>
    </div>
    <i class="grip g-std"></i>
    <div class="bar wide-ic"><svg class="ic"><use href="#textstyle"/></svg></div>
    <div class="combo style-combo"><span>Standard</span></div>
    <i class="pipe"></i>
    <div class="bar wide-ic"><svg class="ic"><use href="#dimstyle"/></svg></div>
    <div class="combo style-combo iso"><span>ISO-25</span></div>
    <i class="pipe"></i>
    <div class="bar wide-ic"><svg class="ic"><use href="#tablestyle"/></svg></div>
    <div class="combo style-combo left"><span>Standard</span></div>
    <i class="pipe"></i>
    <div class="bar wide-ic"><svg class="ic"><use href="#mlstyle"/></svg></div>
    <div class="combo style-combo"><span>Standard</span></div>
  </div>

  <div class="tbrow row2">
    <i class="grip"></i>
    <div class="combo wk-combo left"><span>AutoCAD 经典</span></div>
    <div class="bar"><svg class="ic"><use href="#gear"/></svg><svg class="ic"><use href="#wspace"/></svg></div>
    <i class="grip g-wide"></i>
    <div class="bar"><svg class="ic"><use href="#layer"/></svg></div>
    <div class="combo layer-combo left">
      <svg class="mini"><use href="#bulb"/></svg><svg class="mini"><use href="#sun"/></svg><svg class="mini"><use href="#frz"/></svg><svg class="mini m-lock"><use href="#lock"/></svg><i class="swatch"></i><span>0</span>
    </div>
    <div class="bar"><svg class="ic"><use href="#lyon"/></svg><svg class="ic"><use href="#lyprev"/></svg><svg class="ic"><use href="#lystate"/></svg></div>
    <i class="grip g-wide g-last"></i>
    <div class="combo prop-combo color-c"><i class="swatch"></i><span>ByLayer</span></div>
    <i class="pipe"></i>
    <div class="combo prop-combo ltype-c"><i class="lt-line"></i><span>ByLayer</span></div>
    <i class="pipe p-tight"></i>
    <div class="combo prop-combo lweight-c"><i class="lt-line"></i><span>ByLayer</span></div>
    <i class="pipe p-tight"></i>
    <div class="combo prop-combo plot-c off"><span>BYCOLOR</span></div>
  </div>

  <div class="middle">
    <aside class="sidebar">
      <div class="vbar">
        <i class="vgrip"></i>
        <svg class="ic"><use href="#line"/></svg><svg class="ic"><use href="#xline"/></svg><svg class="ic"><use href="#pline"/></svg><svg class="ic"><use href="#polygon"/></svg><svg class="ic"><use href="#rect"/></svg><svg class="ic"><use href="#arc"/></svg><svg class="ic"><use href="#circle"/></svg><svg class="ic"><use href="#cloud"/></svg><svg class="ic"><use href="#spline"/></svg><svg class="ic"><use href="#ellipse"/></svg><svg class="ic"><use href="#elarc"/></svg><svg class="ic"><use href="#insert"/></svg><svg class="ic"><use href="#mkblock"/></svg><svg class="ic"><use href="#point"/></svg><svg class="ic"><use href="#hatch"/></svg><svg class="ic"><use href="#gradient"/></svg><svg class="ic"><use href="#region"/></svg><svg class="ic"><use href="#table"/></svg><svg class="ic"><use href="#mtext"/></svg><svg class="ic"><use href="#addsel"/></svg>
      </div>
    </aside>

    <main class="workspace">
      <div class="viewrow">
        <section class="viewport">
          <svg class="scene" viewBox="30 100 1199 752">
            <polygon points="606,205 405,744 647,838 808,700" fill="#a4a4a4"/>
            <polygon points="606,205 405,744 647,838 612,290" fill="#acacac"/>
            <!-- UCS icon -->
            <path d="M81 802L49 781" stroke="#2fb52f" stroke-width="4"/>
            <path d="M81 802L116 782" stroke="#c93434" stroke-width="4"/>
            <path d="M81 802V763" stroke="#1f55b8" stroke-width="5"/>
            <text class="ucs" x="80" y="759" fill="#3a7ad8">Z</text>
            <text class="ucs" x="112" y="777" fill="#d84a4a">X</text>
            <text class="ucs" x="44" y="776" fill="#3f9a3f">Y</text>
            <!-- view cube -->
            <ellipse cx="1147" cy="208" rx="58" ry="39" fill="#1a1f26"/>
            <ellipse cx="1147" cy="208" rx="58" ry="39" fill="none" stroke="#3f454d" stroke-width="13"/>
            <text class="compass" transform="matrix(.9 .4 -.8 .5 1107 189)" text-anchor="middle">北</text>
            <text class="compass" transform="matrix(.9 -.35 .6 .6 1187 186)" text-anchor="middle">东</text>
            <text class="compass" transform="matrix(1 -.45 .8 .7 1100 241)" text-anchor="middle">西</text>
            <text class="compass" transform="matrix(1 .45 -.8 .7 1197 241)" text-anchor="middle">南</text>
            <polygon points="1147,146 1182,164 1147,183 1112,162" fill="#b7b7b7"/>
            <polygon points="1112,162 1147,183 1147,223 1112,194" fill="#9f9f9f"/>
            <polygon points="1147,183 1182,164 1182,197 1147,223" fill="#8f8f8f"/>
            <text class="cube" transform="matrix(1 .55 -.95 .55 1142 167)" text-anchor="middle">上</text>
            <text class="cube" transform="matrix(.95 .55 0 1 1118 200)">左</text>
            <text class="cube" transform="matrix(.95 -.6 0 1 1151 212)">前</text>
            <rect x="1123" y="270" width="48" height="17" rx="4" fill="#6b7079" stroke="#4f545b"/>
            <text x="1127" y="283" font-family="Liberation Sans" font-size="11" fill="#b4b8be">WCS</text>
            <path d="M1158 279h7" stroke="#8e939a" stroke-width="2"/>
          </svg>
          <div class="vlabel">[−][西南等轴测][真实]</div>

          <div class="float fl-model">
            <i class="fgrip"></i>
            <div class="fbody">
              <svg class="ic"><use href="#polysolid"/></svg><svg class="ic"><use href="#box"/></svg><svg class="ic"><use href="#wedge"/></svg><svg class="ic"><use href="#cone"/></svg><svg class="ic"><use href="#sphere"/></svg><svg class="ic"><use href="#cylinder"/></svg><svg class="ic"><use href="#torus"/></svg><svg class="ic"><use href="#pyramid"/></svg><svg class="ic"><use href="#helix"/></svg><svg class="ic"><use href="#planar"/></svg><i class="sep"></i>
              <svg class="ic"><use href="#extrude"/></svg><svg class="ic"><use href="#presspull"/></svg><svg class="ic"><use href="#sweep"/></svg><svg class="ic"><use href="#revolve"/></svg><svg class="ic"><use href="#loft"/></svg><i class="sep"></i>
              <svg class="ic"><use href="#union"/></svg><svg class="ic"><use href="#subtract"/></svg><svg class="ic"><use href="#intersect"/></svg><i class="sep"></i>
              <svg class="ic"><use href="#move3d"/></svg><svg class="ic"><use href="#rotate3d"/></svg><svg class="ic"><use href="#align3d"/></svg><svg class="ic"><use href="#array3d"/></svg>
            </div>
            <span class="fclose">×</span>
          </div>

          <div class="float fl-style">
            <i class="fgrip"></i>
            <div class="fbody">
              <svg class="ic"><use href="#mgview"/></svg><i class="sep"></i>
              <svg class="ic"><use href="#wire"/></svg><svg class="ic"><use href="#hidden"/></svg><svg class="ic"><use href="#real"/></svg><svg class="ic"><use href="#concept"/></svg><i class="sep"></i>
              <svg class="ic"><use href="#vsman"/></svg>
            </div>
            <span class="fclose">×</span>
          </div>

          <div class="float fl-view">
            <i class="fgrip"></i>
            <div class="fbody">
              <svg class="ic"><use href="#views"/></svg><i class="sep"></i>
              <svg class="ic"><use href="#vtop"/></svg><svg class="ic"><use href="#vbot"/></svg><svg class="ic"><use href="#vleft"/></svg><svg class="ic"><use href="#vright"/></svg><svg class="ic"><use href="#vfront"/></svg><svg class="ic"><use href="#vback"/></svg><i class="sep"></i>
              <svg class="ic"><use href="#iso1"/></svg><svg class="ic"><use href="#iso2"/></svg><svg class="ic"><use href="#iso3"/></svg><svg class="ic"><use href="#iso4"/></svg><i class="sep"></i>
              <svg class="ic"><use href="#camera"/></svg><i class="sep"></i>
              <svg class="ic"><use href="#vback2"/></svg>
              <div class="view-combo"></div>
            </div>
            <span class="fclose">×</span>
          </div>
        </section>
        <div class="vscroll">
          <i class="tri-up"></i>
          <i class="thumb"></i>
          <i class="tri-dn"></i>
        </div>
      </div>
      <div class="tabs">
        <div class="navs"><b>|◀</b><b>◀</b><b>▶</b><b>▶|</b></div>
        <span class="tab active">模型</span><span class="tab">布局1</span><span class="tab">布局2</span>
        <i class="hthumb"></i>
        <i class="tri-l"></i>
        <i class="tri-rr"></i>
      </div>
    </main>

    <aside class="rightbar">
      <div class="vbar">
        <i class="vgrip"></i>
        <svg class="ic"><use href="#erase"/></svg><svg class="ic"><use href="#xcopy"/></svg><svg class="ic"><use href="#mirror"/></svg><svg class="ic"><use href="#offset"/></svg><svg class="ic"><use href="#array"/></svg><svg class="ic"><use href="#move"/></svg><svg class="ic"><use href="#rotate"/></svg><svg class="ic"><use href="#scale"/></svg><svg class="ic"><use href="#stretch"/></svg><svg class="ic"><use href="#trim"/></svg><svg class="ic"><use href="#extend"/></svg><svg class="ic"><use href="#breakpt"/></svg><svg class="ic"><use href="#break"/></svg><svg class="ic"><use href="#join"/></svg><svg class="ic"><use href="#chamfer"/></svg><svg class="ic"><use href="#fillet"/></svg><svg class="ic"><use href="#blend"/></svg><svg class="ic"><use href="#explode"/></svg>
      </div>
      <div class="vbar">
        <i class="vgrip"></i>
        <svg class="ic"><use href="#ord1"/></svg><svg class="ic"><use href="#ord2"/></svg><svg class="ic"><use href="#ord3"/></svg><svg class="ic"><use href="#ord4"/></svg>
        <i class="hsep"></i>
        <svg class="ic"><use href="#abc"/></svg><svg class="ic"><use href="#hatback"/></svg>
      </div>
    </aside>
  </div>

  <!-- dimension toolbar -->
  <div class="dimrow">
    <div class="dimbar">
      <i class="grip"></i>
      <div class="bar">
        <svg class="ic"><use href="#dlin"/></svg><svg class="ic"><use href="#dali"/></svg><svg class="ic"><use href="#darc"/></svg><svg class="ic"><use href="#dord"/></svg><i class="sep"></i>
        <svg class="ic"><use href="#drad"/></svg><svg class="ic"><use href="#djog"/></svg><svg class="ic"><use href="#ddia"/></svg><svg class="ic"><use href="#dang"/></svg><i class="sep"></i>
        <svg class="ic"><use href="#dquick"/></svg><svg class="ic"><use href="#dbase"/></svg><svg class="ic"><use href="#dcont"/></svg><svg class="ic"><use href="#dspace"/></svg><svg class="ic"><use href="#dbreak"/></svg><i class="sep"></i>
        <svg class="ic"><use href="#dtol"/></svg><svg class="ic"><use href="#dcen"/></svg><svg class="ic"><use href="#dinsp"/></svg><svg class="ic"><use href="#djogl"/></svg><i class="sep"></i>
        <svg class="ic"><use href="#dedit"/></svg><svg class="ic"><use href="#dtext"/></svg><svg class="ic"><use href="#dupd"/></svg><i class="pipe"></i>
        <div class="combo dim-combo"><span>ISO-25</span></div>
        <svg class="ic"><use href="#dimstyle"/></svg>
      </div>
    </div>
  </div>

  <!-- command line -->
  <div class="cmd">
    <div class="cmd-side">
      <i class="vgrip"></i>
      <span class="cmd-x">✕</span>
      <span class="cmd-tool"><svg class="wrench" viewBox="0 0 18 18"><path fill="#eee" d="M2 5l3-3 1 3 2 0-1-4q4-1 5 3 0 2-1 3l6 7-3 3-7-6q-2 1-3 0-3-2-2-6z"/></svg></span>
    </div>
    <div class="cmd-main">
      <div class="cmd-log">
        <p><b>命令</b>: _vscurrent</p>
        <p><b>输入选项</b> [<b>二维线框</b>(2)/<b>线框</b>(W)/<b>隐藏</b>(H)/<b>真实</b>(R)/<b>概念</b>(C)/<b>着色</b>(S)/<b>带边缘着色</b>(E)/<b>灰度</b>(G)/<b>勾画</b>(SK)/X <b>射线</b>(X)/<b>其他</b>(O)] &lt;<b>概念</b>&gt;: _R</p>
      </div>
      <div class="cmd-input">
        <span class="prompt">&gt;_</span><i class="arrow small"></i><span class="hint">键入命令</span>
      </div>
    </div>
  </div>

  <!-- status bar -->
  <footer class="status">
    <span class="coords">631.1505, 323.9113, 0.0000</span>
    <div class="sbtns">
      <span class="sb"><svg class="ic"><use href="#s-infer"/></svg></span><span class="sb"><svg class="ic"><use href="#s-snap"/></svg></span><span class="sb"><svg class="ic"><use href="#s-grid"/></svg></span><span class="sb nar"><svg class="ic"><use href="#s-ortho"/></svg></span><span class="sb gapl"><svg class="ic"><use href="#s-polar"/></svg></span><span class="sb"><svg class="ic"><use href="#s-osnap"/></svg></span><span class="sb"><svg class="ic"><use href="#s-3d"/></svg></span><span class="sb on"><svg class="ic"><use href="#s-ang"/></svg></span><span class="sb on"><svg class="ic"><use href="#s-otrack"/></svg></span><span class="sb"><svg class="ic"><use href="#s-dyn"/></svg></span><span class="sb"><svg class="ic"><use href="#s-lw"/></svg></span><span class="sb"><svg class="ic"><use href="#s-tpy"/></svg></span><span class="sb"><svg class="ic"><use href="#s-qp"/></svg></span><span class="sb"><svg class="ic"><use href="#s-sc"/></svg></span><span class="sb"><svg class="ic"><use href="#s-cross"/></svg></span>
    </div>
    <div class="sright">
      <span class="sb model">模型</span>
      <span class="sb"><svg class="ic"><use href="#s-paper"/></svg></span><span class="sb"><svg class="ic"><use href="#s-vp"/></svg></span>
      <span class="gapbox"></span>
      <span class="sb scale"><svg class="ic"><use href="#s-anno"/></svg>1:1<i class="arrow small"></i></span>
      <span class="sb sb-after"><svg class="ic"><use href="#s-anno"/></svg></span><span class="sb"><svg class="ic dim"><use href="#s-anno"/></svg></span>
      <span class="gapthin"></span>
      <span class="sb sb-t"><svg class="ic"><use href="#gear"/></svg></span><span class="sb sb-t"><svg class="ic"><use href="#s-lockw"/></svg></span><span class="sb sb-t"><svg class="ic"><use href="#s-tray"/></svg></span><span class="sb sb-b"><svg class="ic"><use href="#bulb"/></svg></span>
      <i class="arrow lt small"></i>
      <span class="sb sb-l"><svg class="ic"><use href="#s-clean"/></svg></span>
    </div>
  </footer>

  <!-- watermark -->
  <div class="watermark">
    <svg class="wm-logo" viewBox="0 0 46 56"><path d="M3 14v30q0 7 7 10M15 3q-5-1-5 5v36q0 7 7 5l24-17q6-5 0-9z" fill="none" stroke="#c8c8c8" stroke-width="4" stroke-linejoin="round" stroke-linecap="round"/><path fill="#c8c8c8" d="M19 21l10 7-10 7z"/><path stroke="#c8c8c8" stroke-width="2" d="M32 21v14"/></svg>
    <div class="wm-text">
      <div class="wm-cn">溜溜自学</div>
      <div class="wm-en">ZIXUE.3D66.COM</div>
    </div>
  </div>
</div>
</body>
</html>
```

FILE: styles.css
```css
* { box-sizing: border-box; }
html, body { margin: 0; padding: 0; }
body { width: 1280px; height: 979px; overflow: hidden; background: #6a6a6a; font-family: "Open Sans", "Noto Sans CJK SC", sans-serif; font-size: 12px; color: #222; }
.defs { position: absolute; }
.app { position: relative; width: 1280px; height: 979px; display: flex; flex-direction: column; background: #696969; }

/* icons */
.ic { width: 18px; height: 18px; flex: none; fill: none; stroke: #3a3a3a; stroke-width: 1; }
.ic.lt { stroke: #efefef; fill: none; }
.ic.dim { opacity: .5; }
.mini { width: 15px; height: 15px; flex: none; fill: none; stroke: #333; margin-right: 1px; }
.m-lock { margin-left: 4px; }
.arrow { display: inline-block; flex: none; width: 0; height: 0; border-left: 4px solid transparent; border-right: 4px solid transparent; border-top: 5px solid #222; }
.arrow.small { border-left-width: 2.500px; border-right-width: 2.500px; border-top-width: 3px; border-top-color: #444; }
.arrow.lt { border-top-color: #ddd; }
.arrow.faded { border-top-color: #aaa; }

/* title bar */
.titlebar { height: 25px; display: flex; align-items: stretch; background: linear-gradient(#8e8e8e, #767676 60%, #6a6a6a); border-bottom: 1px solid #3f3f3f; }
.appmenu { position: relative; z-index: 2; width: 41px; height: 41px; flex: none; display: flex; align-items: center; background: linear-gradient(#a4a4a4, #6d6d6d); border-right: 1px solid #444; border-bottom: 1px solid #444; padding-left: 3px; gap: 1px; }
.applogo { width: 26px; height: 34px; }
.qat { width: 233px; padding-left: 8px; display: flex; align-items: center; gap: 5px; }
.qat .qs { margin-left: 2px; }
.qat .q5 { margin-left: 1px; }
.qat .arrow.small { margin: 0 3px 0 0; }
.combo { position: relative; display: flex; align-items: center; justify-content: center; flex: none; height: 24px; padding-right: 26px; background: linear-gradient(#f5f5f5, #d4d4d4); border: 1px solid #8c8c8c; border-radius: 3px; font-size: 12px; color: #222; }
.combo::after { content: ""; position: absolute; right: 5px; top: 50%; margin-top: -2px; border-left: 4px solid transparent; border-right: 4px solid transparent; border-top: 5px solid #222; }
.combo.left { justify-content: flex-start; padding-left: 7px; }
.ws-combo { width: 178px; height: 22px; margin-top: 1px; justify-content: flex-start; gap: 0; padding-left: 2px; color: #333; font-size: 12.500px; }
.qat-more { width: 16px; display: flex; align-items: center; justify-content: center; background: linear-gradient(#bbb, #8d8d8d); border-right: 1px solid #666; }
.aero { background: radial-gradient(ellipse 22px 22px at 8px 16px, #eef6fc, transparent), radial-gradient(ellipse 34px 8px at 84px 25px, #bcdcf4, transparent), linear-gradient(90deg, #4a92d4, #2a70c2 50%, #1859a8); }
.doc-title { width: 248px; flex: none; display: flex; align-items: center; gap: 16px; padding-left: 31px; font-size: 12.500px; color: #11305c; }
.infocenter { width: 441px; flex: none; display: flex; align-items: center; gap: 0; color: #eee; }
.tri-r { width: 0; height: 0; margin: 0 5px 0 1px; border-top: 4px solid transparent; border-bottom: 4px solid transparent; border-left: 5px solid #111; }
.search { width: 179px; height: 22px; flex: none; background: #f2f2f2; padding: 2px 4px; font-style: italic; color: #666; font-size: 11px; line-height: 18px; }
.binoc { margin-left: 5px; margin-right: 5px; }
.login { margin-left: 4px; color: #e0e0e0; font-size: 12px; }
.push { margin-left: 61px; margin-right: 7px; }
.xchg { fill: #2f5fb0; stroke: none; margin-right: 7px; }
.a360 { stroke: #e8f0f8; margin-right: 3px; }
.helpball { width: 17px; height: 17px; margin-left: 21px; margin-right: 11px; border-radius: 50%; background: #eef3fa; border: 2px solid #4c78c4; color: #2455a4; font: 700 12px/13px "Liberation Sans", sans-serif; text-align: center; flex: none; }
.winbtns { flex: 1; display: flex; align-items: flex-start; justify-content: flex-end; padding-right: 8px; background: radial-gradient(ellipse 16px 14px at 6px 10px, #e8f2fa, transparent), radial-gradient(ellipse 50px 10px at 80px 22px, #e4eff9, transparent), linear-gradient(90deg, #3478c4, #1d62b4); }
.wb { height: 17px; width: 27px; display: flex; align-items: center; justify-content: center; background: rgba(120, 170, 225, .35); border: 1px solid #1a4d90; border-top: 0; color: #fff; font: 700 11px "DejaVu Sans", sans-serif; }
.wb-close { width: 42px; background: rgba(190, 210, 235, .3); }
.wb-min { display: block; width: 10px; height: 3px; background: #e8e8e8; }
.wb-max { position: relative; display: block; width: 8px; height: 8px; margin: 2px 2px 0 0; border: 2px solid #e8e8e8; }
.wb-max::before { content: ""; position: absolute; left: 1px; top: -5px; width: 8px; height: 8px; border: 1px solid #e8e8e8; border-left: 0; border-bottom: 0; }

/* menu bar */
.menubar { height: 20px; display: flex; align-items: center; gap: 25.400px; padding-left: 55px; background: linear-gradient(#747474, #5e5e5e); color: #dcdcdc; font-size: 12px; }
.menubar u { text-underline-offset: 1px; }
.docbtns { margin-left: auto; margin-right: 4px; display: flex; align-items: center; gap: 6px; color: #ddd; font-size: 11px; }
.docbtns .wb-min { width: 9px; height: 2px; margin-top: 7px; }
.docbtns .wb-max { border-width: 1px; }

/* docked toolbars */
.tbrow { display: flex; align-items: center; padding-left: 3px; }
.row1 { height: 24px; background: #636363; }
.row2 { height: 28px; background: #606060; padding-top: 2px; }
.bar { display: flex; align-items: center; height: 24px; background: #ebebeb; padding: 0; }
.bar > .ic { width: 23px; padding: 0 2.500px; }
.wide-ic > .ic { width: 24px; padding: 0 3px; }
.grip { width: 5px; height: 22px; flex: none; margin-right: 1px; background: repeating-linear-gradient(#2c2c2c 0 1px, #9a9a9a 1px 2px); }
.g-std { width: 6px; margin: 0 1px 0 3px; }
.g-wide { width: 6px; margin: 0 1px 0 3px; }
.g-last { margin-right: 2px; }
.sep { width: 1px; height: 19px; flex: none; margin: 0 3px 0 2px; background: #a8a8a8; }
.std { width: 636px; }
.std .arrow.small { margin: 0 5px 0 4px; }
.pipe { width: 5px; height: 24px; flex: none; border-left: 1px solid #cfcfcf; border-right: 1px solid #cfcfcf; margin: 0 1px; }
.p-tight { margin: 0 0 0 1px; }
.style-combo { width: 118px; }
.style-combo.iso { padding-right: 42px; }
.style-combo.left { padding-left: 4px; }
.style-combo span, .dim-combo span { font-size: 12.500px; }
.wk-combo { width: 174px; margin-right: 1px; font-size: 12.500px; }
.layer-combo { width: 299px; height: 24px; padding-left: 1px; background: linear-gradient(#fafafa, #e4e4e4); }
.swatch { width: 10px; height: 10px; flex: none; background: #fff; border: 1px solid #111; margin-right: 5px; }
.prop-combo { justify-content: flex-start; padding-left: 6px; font-family: "Liberation Mono", monospace; font-size: 10px; color: #111; }
.prop-combo .swatch { margin-right: 3px; }
.color-c { width: 151px; }
.ltype-c { width: 159px; padding-left: 3px; }
.lweight-c { width: 126px; padding-left: 5px; }
.plot-c { width: 119px; padding-left: 8px; }
.off { color: #888; }
.off::after { border-top-color: #aaa; }
.lt-line { width: 60px; height: 1px; background: #111; margin-right: 5px; flex: none; }
.lweight-c .lt-line { width: 35px; margin-right: 4px; }

/* middle */
.middle { height: 768px; display: flex; margin-top: 3px; }
.sidebar { width: 30px; flex: none; padding-left: 1px; }
.rightbar { width: 34px; flex: none; padding: 2px 0 0 7px; display: flex; flex-direction: column; gap: 3px; }
.vbar { width: 24px; display: flex; flex-direction: column; align-items: center; background: #ebebeb; padding-bottom: 1px; }
.vbar .ic { width: 22px; height: 22px; padding: 2px; }
.vgrip { display: block; width: 100%; height: 8px; background-color: #4e4e4e; background-image: repeating-linear-gradient(90deg, #bbb 0 1px, transparent 1px 2px); background-size: 14px 3px; background-position: center; background-repeat: no-repeat; }
.hsep { width: 20px; height: 1px; margin: 3px 0; background: #aaa; }
.workspace { width: 1216px; flex: none; display: flex; flex-direction: column; }
.viewrow { height: 752px; display: flex; }
.viewport { position: relative; width: 1199px; background: #212830; overflow: hidden; }
.scene { position: absolute; left: 0; top: 0; width: 1199px; height: 752px; }
.ucs { font: 200 17px "Inter", sans-serif; }
.cube { font: 24px "Noto Sans CJK SC", sans-serif; fill: #555; }
.compass { font: 20px "Noto Sans CJK SC", sans-serif; fill: #c4c6c9; }
.vlabel { position: absolute; left: 5px; top: 7px; color: #dedede; font-size: 12px; line-height: 16px; letter-spacing: .15px; }

.vscroll { position: relative; width: 17px; background: #f1f1f1; border-left: 1px solid #ddd; }
.vscroll .thumb { position: absolute; left: 1px; top: 537px; width: 15px; height: 15px; background: #dedede; border: 1px solid #aaa; }
.tri-up, .tri-dn { position: absolute; left: 5px; border-left: 3px solid transparent; border-right: 3px solid transparent; }
.tri-up { top: 6px; border-bottom: 4px solid #333; }
.tri-dn { bottom: 6px; border-top: 4px solid #333; }
.tabs { position: relative; height: 16px; display: flex; align-items: center; background: #f2f2f2; padding-left: 3px; border-bottom: 1px solid #ccc; }
.navs { display: flex; width: 57px; }
.navs b { width: 14px; height: 14px; border-right: 1px solid #aaa; font: 8px/14px "DejaVu Sans", sans-serif; color: #444; text-align: center; }
.tab { font-size: 12px; line-height: 15px; color: #222; clip-path: polygon(0 100%, 6px 0, 100% 0, calc(100% - 6px) 100%); }
.tab.active { background: #222; color: #fff; width: 38px; padding: 0 0 0 8px; }
.tab:not(.active) { border-top: 1px solid #999; margin-left: -3px; padding: 0 6px 0 12px; }
.hthumb { position: absolute; left: 791px; top: 1px; width: 5px; height: 13px; border: 1px solid #aaa; border-right: 0; }
.tri-l, .tri-rr { position: absolute; top: 5px; border-top: 3px solid transparent; border-bottom: 3px solid transparent; }
.tri-l { left: 804px; border-right: 4px solid #333; }
.tri-rr { left: 1187px; border-left: 4px solid #333; }

/* floating toolbars over the drawing */
.float { position: absolute; display: flex; height: 22px; background: #ebebeb; }
.fgrip { width: 8px; flex: none; background-color: #4e4e4e; background-image: repeating-linear-gradient(#111 0 1px, #999 1px 2px); background-size: 3px 14px; background-position: center; background-repeat: no-repeat; }
.fbody { flex: 1; min-width: 0; display: flex; align-items: center; }
.fbody > .ic { width: 23px; padding: 0 2.500px; }
.fbody .sep { margin: 0 3px 0 2px; height: 18px; }
.fclose { width: 8px; flex: none; background: #4e4e4e; color: #fff; font: 700 10px/8px "Liberation Sans", sans-serif; text-align: center; }
.fl-model { left: 80px; top: 32px; width: 539px; }
.fl-style { left: 662px; top: 33px; width: 166px; }
.fl-style .sep { margin: 0 4px 0 2px; }
.fl-view { left: 421px; top: 75px; width: 479px; }
.view-combo { position: relative; margin-left: 1px; width: 138px; height: 20px; flex: none; background: #f3f3f3; border: 1px solid #cfcfcf; border-radius: 2px; }
.view-combo::after { content: ""; position: absolute; right: 4px; top: 8px; border-left: 4px solid transparent; border-right: 4px solid transparent; border-top: 5px solid #bbb; }

/* dimension toolbar */
.dimrow { height: 37px; padding: 5px 0 0 33px; background: #6a6a6a; }
.dimbar { width: 637px; height: 24px; display: flex; align-items: center; background: #333; padding: 1px 0 1px 1px; }
.dimbar .bar { flex: 1; min-width: 0; height: 22px; padding-left: 0; margin-left: 1px; }
.dimbar .grip { height: 20px; width: 3px; margin-right: 0; }
.dimbar .pipe { height: 20px; margin: 0 1px 0 0; }
.dim-combo { width: 120px; height: 21px; padding-right: 42px; }

/* command line */
.cmd { height: 54px; display: flex; }
.cmd-side { width: 22px; flex: none; display: flex; flex-direction: column; align-items: center; background: #7a7a7a; }
.cmd-side .vgrip { height: 9px; background-color: #8a8a8a; }
.cmd-x { height: 24px; color: #fff; font: 700 12px/26px "Liberation Sans", sans-serif; }
.cmd-tool { flex: 1; width: 100%; display: flex; align-items: center; justify-content: center; background: #4d4d4d; }
.wrench { width: 15px; height: 15px; }
.cmd-main { flex: 1; display: flex; flex-direction: column; }
.cmd-log { height: 33px; background: #c8c8c8; border-bottom: 1px solid #666; padding: 0 0 0 4px; font: 11.670px/15px "Liberation Mono", monospace; color: #222; }
.cmd-log p { margin: 0; height: 15px; white-space: pre; }
.cmd-log b { font: 400 13px/15px "Noto Sans CJK SC", sans-serif; }
.cmd-input { flex: 1; display: flex; align-items: center; background: #fff; padding-left: 6px; gap: 3px; }
.prompt { width: 14px; height: 14px; border: 1px solid #8aa; background: #dde; font: 8px/12px "Liberation Mono", monospace; text-align: center; color: #345; }
.hint { margin-left: 8px; color: #aaa; font-style: italic; font-size: 13px; }

/* status bar */
.status { height: 18px; margin-top: 1px; display: flex; align-items: center; background: linear-gradient(#7c7c7c, #5e5e5e); border-top: 2px solid #333; }
.coords { width: 210px; padding-left: 12px; color: #808080; font-family: "Liberation Sans", sans-serif; font-size: 12.500px; flex: none; white-space: nowrap; }
.sbtns, .sright { display: flex; align-items: stretch; height: 100%; }
.sright { margin-left: auto; align-items: center; }
.sb { width: 22px; height: 16px; display: flex; align-items: center; justify-content: center; background: linear-gradient(#ddd, #bbb); border-left: 1px solid #666; flex: none; }
.sb .ic { width: 14px; height: 14px; }
.sb.nar { width: 18px; }
.sb.gapl { margin-left: 5px; }
.sb.on { background: linear-gradient(#cfe6f6, #8fc4e6); }
.model { width: 28px; font-size: 12px; line-height: 14px; background: #d8d8d8; }
.scale { width: 40px; gap: 1px; font-size: 11px; }
.gapbox { width: 20px; height: 16px; background: #777; margin: 0 5px 0 3px; }
.sb-after { margin-left: 4px; }
.gapthin { width: 5px; height: 16px; background: #4a4a4a; }
.sb-t { width: 23px; }
.sb-b { width: 24px; background: linear-gradient(#888, #666); }
.sb-l { width: 21px; }
.sright .arrow.small { margin: 0 6px 0 8px; }
.sright .scale .arrow.small { margin: 0; }

/* watermark */
.watermark { position: absolute; left: 974px; top: 839px; width: 235px; height: 115px; display: flex; align-items: center; gap: 19px; padding: 18px 0 0 14px; background: #1f3058; }
.wm-logo { width: 46px; height: 56px; flex: none; }
.wm-text { display: flex; flex-direction: column; gap: 7px; }
.wm-cn { height: 38px; font: 700 33px/38px "Noto Sans CJK SC", sans-serif; letter-spacing: 3px; color: #c8c8c8; }
.wm-en { font: 300 15px/16px "Inter", sans-serif; letter-spacing: 1.500px; color: #b8bcc4; white-space: nowrap; }
```
